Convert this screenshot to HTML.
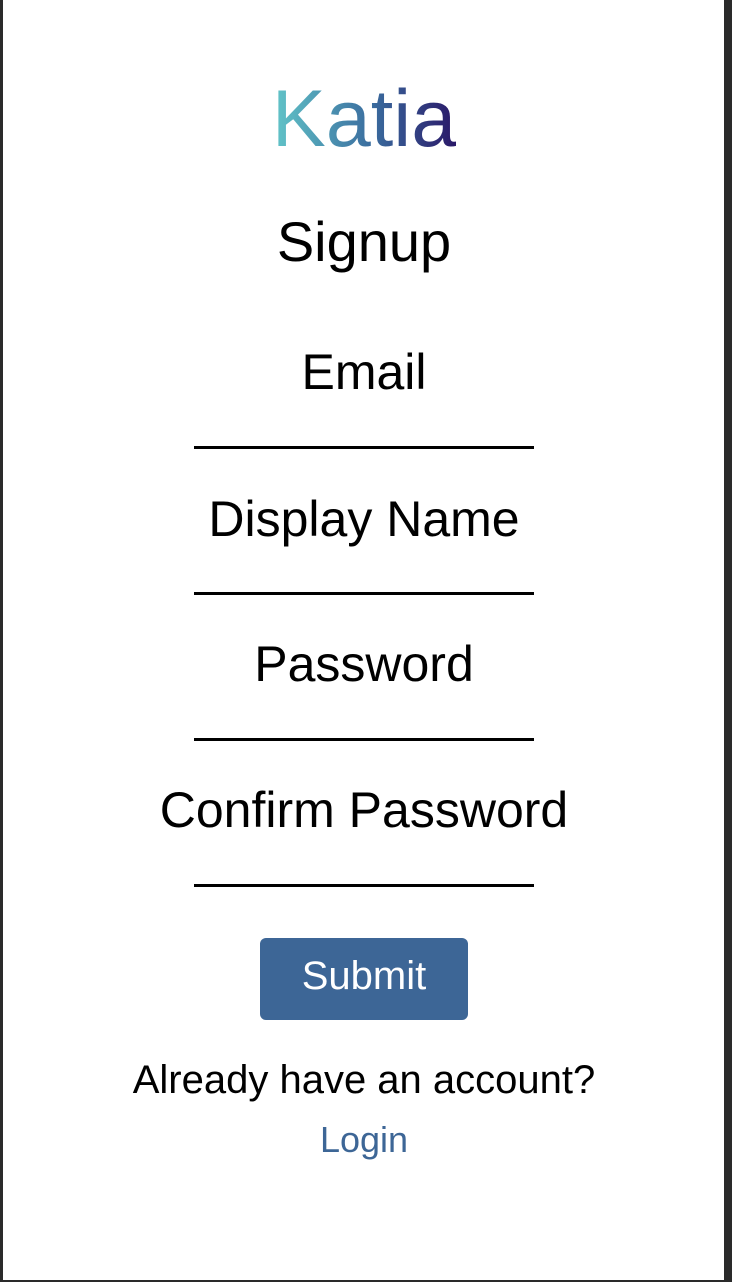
<!DOCTYPE html>
<html><head><style>
html,body{margin:0;padding:0}
body{width:732px;height:1282px;position:relative;background:#2a2a2a;font-family:"Liberation Sans",sans-serif;overflow:hidden}
.pg{position:absolute;left:3px;top:0;width:721px;height:1280px;background:#fff}
.t{position:absolute;left:0;width:728px;text-align:center;white-space:nowrap;line-height:1}
.line{position:absolute;left:194px;width:340px;height:3px;background:#000}
.logo{background:linear-gradient(90deg,#62c6c9,#3a6b9e 55%,#2a1868);-webkit-background-clip:text;background-clip:text;color:transparent;font-size:81px}
</style></head><body>
<div class="pg"></div>
<div class="t" style="top:0"><span class="logo" style="display:inline-block;margin-top:79px;line-height:1">Katia</span></div>
<div class="t" style="top:214px;font-size:56px">Signup</div>
<div class="t" style="top:347px;font-size:50px">Email</div>
<div class="line" style="top:446px"></div>
<div class="t" style="top:494px;font-size:50px">Display Name</div>
<div class="line" style="top:592px"></div>
<div class="t" style="top:639px;font-size:50px">Password</div>
<div class="line" style="top:738px"></div>
<div class="t" style="top:785px;font-size:50px">Confirm Password</div>
<div class="line" style="top:884px"></div>
<div style="position:absolute;left:260px;top:938px;width:208px;height:82px;background:#3d6696;border-radius:6px;color:#fff;font-size:40px;text-align:center;line-height:76px">Submit</div>
<div class="t" style="top:1060px;font-size:40px">Already have an account?</div>
<div class="t" style="top:1122px;font-size:36px;color:#3d6696">Login</div>
</body></html>
